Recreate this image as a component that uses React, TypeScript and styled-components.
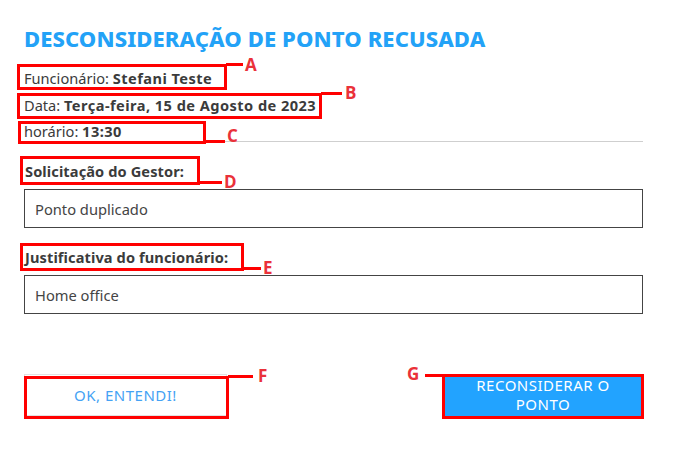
import styled, { createGlobalStyle } from "styled-components";

const GlobalStyle = createGlobalStyle`
  * {
    box-sizing: border-box;
  }
  body {
    margin: 0;
    background: #fff;
    font-family: "Noto Sans", "Open Sans", sans-serif;
    color: #3b3b3b;
  }
`;

const Page = styled.div`
  position: relative;
  width: 677px;
  height: 458px;
  padding: 26px 34px 0 24px;
  display: flex;
  flex-direction: column;
`;

const Title = styled.h1`
  margin: 0 0 18px 0;
  font-size: 22px;
  line-height: 24px;
  font-weight: 800;
  color: #23a2f7;
  letter-spacing: 0.1px;
`;

const InfoList = styled.div`
  display: flex;
  flex-direction: column;
  gap: 6.5px;
`;

const InfoRow = styled.p`
  margin: 0;
  font-size: 14.6px;
  line-height: 20px;
  color: #3b3b3b;
  b {
    font-weight: 700;
    letter-spacing: 0.45px;
  }
`;

const Divider = styled.hr`
  margin: 0;
  border: none;
  height: 1px;
  background: #cfcfcf;
`;

const Field = styled.div`
  display: flex;
  flex-direction: column;
  gap: 8px;
  margin-top: 19px;
`;

const FieldLabel = styled.label`
  font-size: 14.6px;
  line-height: 20px;
  font-weight: 700;
  color: #3b3b3b;
  padding-left: 1px;
  letter-spacing: 0.1px;
`;

const FieldBox = styled.div`
  height: 39px;
  border: 1px solid #444;
  padding: 0 10px;
  display: flex;
  align-items: center;
  font-size: 14.7px;
  color: #444;
`;

const Actions = styled.div`
  display: flex;
  justify-content: space-between;
  margin-top: 60px;
`;

const Button = styled.button<{ $primary?: boolean }>`
  width: ${(p) => (p.$primary ? "200px" : "203px")};
  height: 42px;
  padding: 0 24px;
  font-family: inherit;
  font-size: 15px;
  line-height: 19px;
  letter-spacing: 0.5px;
  text-transform: uppercase;
  cursor: pointer;
  border: 1px solid ${(p) => (p.$primary ? "#22a3ff" : "#e2e2e2")};
  background: ${(p) => (p.$primary ? "#22a3ff" : "#fff")};
  color: ${(p) => (p.$primary ? "#fff" : "#44a2f4")};
`;

// red review marks drawn on top of the form
const Overlay = styled.div`
  position: absolute;
  inset: 0;
  pointer-events: none;
`;

const MarkBox = styled.div<{ $x: number; $y: number; $w: number; $h: number }>`
  position: absolute;
  left: ${(p) => p.$x}px;
  top: ${(p) => p.$y}px;
  width: ${(p) => p.$w}px;
  height: ${(p) => p.$h}px;
  border: 3px solid #ff0000;
`;

const Leader = styled.div<{ $x: number; $y: number; $w: number }>`
  position: absolute;
  left: ${(p) => p.$x}px;
  top: ${(p) => p.$y}px;
  width: ${(p) => p.$w}px;
  height: 3px;
  background: #ff0000;
`;

const Letter = styled.span<{ $x: number; $y: number }>`
  position: absolute;
  left: ${(p) => p.$x}px;
  top: ${(p) => p.$y}px;
  font-family: "Open Sans", sans-serif;
  font-size: 17px;
  line-height: 20px;
  font-weight: 700;
  color: #ea3139;
`;

type Mark = {
  letter: string;
  box: [number, number, number, number];
  leader: [number, number, number];
  at: [number, number];
};

const marks: Mark[] = [
  { letter: "A", box: [17, 64, 210, 26], leader: [226, 63, 17], at: [245, 55] },
  { letter: "B", box: [17, 93, 305, 26], leader: [321, 92, 21], at: [345, 83] },
  { letter: "C", box: [18, 121, 188, 23], leader: [205, 140, 20], at: [227, 126] },
  { letter: "D", box: [20, 156, 180, 29], leader: [199, 181, 23], at: [224, 172] },
  { letter: "E", box: [20, 243, 224, 28], leader: [243, 267, 18], at: [263, 258] },
  { letter: "F", box: [24, 376, 205, 43], leader: [228, 375, 25], at: [258, 366] },
  { letter: "G", box: [442, 374, 202, 45], leader: [425, 374, 18], at: [407, 364] },
];

export default function App() {
  return (
    <>
      <GlobalStyle />
      <Page>
        <Title>DESCONSIDERAÇÃO DE PONTO RECUSADA</Title>
        <InfoList>
          <InfoRow>
            Funcionário: <b>Stefani Teste</b>
          </InfoRow>
          <InfoRow>
            Data: <b>Terça-feira, 15 de Agosto de 2023</b>
          </InfoRow>
          <InfoRow>
            horário: <b>13:30</b>
          </InfoRow>
        </InfoList>
        <Divider />
        <Field>
          <FieldLabel>Solicitação do Gestor:</FieldLabel>
          <FieldBox>Ponto duplicado</FieldBox>
        </Field>
        <Field>
          <FieldLabel>Justificativa do funcionário:</FieldLabel>
          <FieldBox>Home office</FieldBox>
        </Field>
        <Actions>
          <Button>OK, entendi!</Button>
          <Button $primary>Reconsiderar o ponto</Button>
        </Actions>
        <Overlay>
          {marks.map((m) => (
            <div key={m.letter}>
              <MarkBox $x={m.box[0]} $y={m.box[1]} $w={m.box[2]} $h={m.box[3]} />
              <Leader $x={m.leader[0]} $y={m.leader[1]} $w={m.leader[2]} />
              <Letter $x={m.at[0]} $y={m.at[1]}>
                {m.letter}
              </Letter>
            </div>
          ))}
        </Overlay>
      </Page>
    </>
  );
}
